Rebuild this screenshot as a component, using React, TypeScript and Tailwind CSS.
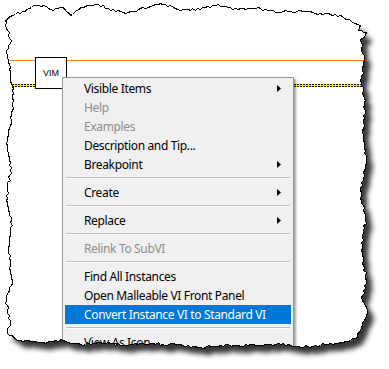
import React from "react";

type Pt = [number, number];

const anchors: Pt[] = [
  [5, 20], [10, 16], [17, 12], [25, 11], [33, 5], [43, 5], [53, 10], [62, 7], [70, 15], [80, 7], [87, 5],
  [103, 5], [110, 10], [128, 12], [150, 6], [160, 3], [175, 8], [190, 10], [215, 5], [235, 8], [260, 8],
  [275, 12], [300, 10], [320, 13], [340, 15], [352, 22], [360, 25],
  [358, 30], [366, 32], [360, 40], [364, 60], [360, 80], [365, 100], [362, 130], [366, 160], [360, 190],
  [365, 220], [361, 250], [366, 280], [362, 300], [367, 310], [360, 330], [355, 338],
  [340, 342], [320, 345], [300, 347], [283, 343], [260, 345], [233, 345], [200, 347], [175, 344],
  [150, 343], [125, 345], [100, 342], [80, 344], [63, 340], [40, 342], [20, 340], [7, 333],
  [10, 320], [6, 300], [12, 280], [8, 250], [11, 220], [6, 200], [10, 170], [7, 140], [12, 110],
  [13, 88], [8, 62], [6, 50], [11, 40], [7, 30],
];

function rng(seed: number) {
  return () => {
    seed |= 0;
    seed = (seed + 0x6d2b79f5) | 0;
    let t = Math.imul(seed ^ (seed >>> 15), 1 | seed);
    t = (t + Math.imul(t ^ (t >>> 7), 61 | t)) ^ t;
    return ((t ^ (t >>> 14)) >>> 0) / 4294967296;
  };
}

function buildPath(a: Pt[]): string {
  const r = rng(11);
  const pts: Pt[] = [];
  for (let i = 0; i < a.length; i++) {
    const [x0, y0] = a[i];
    const [x1, y1] = a[(i + 1) % a.length];
    const d = Math.hypot(x1 - x0, y1 - y0) || 1;
    const n = Math.max(1, Math.round(d / 2.5));
    const nx = -(y1 - y0) / d;
    const ny = (x1 - x0) / d;
    for (let k = 0; k < n; k++) {
      const t = k / n;
      const j = k === 0 ? 0 : (r() - 0.5) * 2.4;
      const x = x0 + (x1 - x0) * t + nx * j;
      const y = y0 + (y1 - y0) * t + ny * j;
      pts.push([Math.round(x) + 0.5, Math.round(y) + 0.5]);
    }
  }
  return "M" + pts.map((p) => p.join(",")).join("L") + "Z";
}

const torn = buildPath(anchors);

type Item =
  | { t: string; sub?: boolean; dis?: boolean; hi?: boolean }
  | "sep";

const items: Item[] = [
  { t: "Visible Items", sub: true },
  { t: "Help", dis: true },
  { t: "Examples", dis: true },
  { t: "Description and Tip..." },
  { t: "Breakpoint", sub: true },
  "sep",
  { t: "Create", sub: true },
  "sep",
  { t: "Replace", sub: true },
  "sep",
  { t: "Relink To SubVI", dis: true },
  "sep",
  { t: "Find All Instances" },
  { t: "Open Malleable VI Front Panel" },
  { t: "Convert Instance VI to Standard VI", hi: true },
  "sep",
  { t: "View As Icon" },
];

function Arrow() {
  return (
    <svg width="4" height="7" viewBox="0 0 4 7" className="mr-[10px]">
      <polygon points="0,0 4,3.5 0,7" fill="#000" />
    </svg>
  );
}

export default function App() {
  return (
    <div className="relative w-[389px] h-[369px] overflow-hidden bg-white [font-family:'Noto_Sans','Open_Sans',sans-serif]">
      {/* wires */}
      <div className="absolute left-0 right-0 top-[60px] h-px bg-[#ff8000]" />
      <div className="absolute left-0 right-0 top-[84px] flex flex-col">
        <div className="h-px bg-[repeating-linear-gradient(90deg,#000_0_2px,#ffff00_2px_3px)]" />
        <div className="h-px bg-[#ffff00]" />
        <div className="h-px bg-[repeating-linear-gradient(90deg,#000_0_2px,#ffff00_2px_3px)]" />
      </div>

      {/* VIM node */}
      <div className="absolute left-[35px] top-[57px] w-[32px] h-[32px] border border-black bg-white flex items-center justify-center text-[9px] leading-none text-black [font-family:'Liberation_Sans',sans-serif]">
        VIM
      </div>

      {/* context menu */}
      <div className="absolute left-[62px] top-[77px] w-[232px] border border-[#979797] bg-[#f0f0f0] px-[2px] py-px shadow-[2px_2px_2px_rgba(0,0,0,0.35)] text-[12px] leading-none tracking-[-0.35px]">
        {items.map((it, i) =>
          it === "sep" ? (
            <div key={i} className="h-[9px] pt-[3px] mx-px">
              <div className="h-px bg-[#bdbdbd]" />
              <div className="h-px bg-white" />
            </div>
          ) : (
            <div
              key={i}
              className={
                "h-[19px] flex items-center justify-between pl-[19px] " +
                (it.hi ? "bg-[#0078d7] text-white" : it.dis ? "text-[#8d8d8d]" : "text-black")
              }
            >
              <span className="whitespace-nowrap">{it.t}</span>
              {it.sub ? <Arrow /> : null}
            </div>
          )
        )}
      </div>

      {/* torn paper edge overlay */}
      <svg
        className="absolute inset-0 pointer-events-none"
        width="389"
        height="369"
        viewBox="0 0 389 369"
      >
        <defs>
          <mask id="outside" maskUnits="userSpaceOnUse" x="0" y="0" width="389" height="369">
            <rect x="0" y="0" width="389" height="369" fill="white" />
            <path d={torn} fill="black" />
          </mask>
          <filter id="blur" x="-10%" y="-10%" width="120%" height="120%">
            <feGaussianBlur stdDeviation="2.5" />
          </filter>
        </defs>
        <rect x="0" y="0" width="389" height="369" fill="white" mask="url(#outside)" />
        <g mask="url(#outside)">
          <path d={torn} fill="#222" opacity="0.9" transform="translate(6,7)" filter="url(#blur)" />
        </g>
        <path d={torn} fill="none" stroke="#000" strokeWidth="1" shapeRendering="crispEdges" />
      </svg>
    </div>
  );
}
